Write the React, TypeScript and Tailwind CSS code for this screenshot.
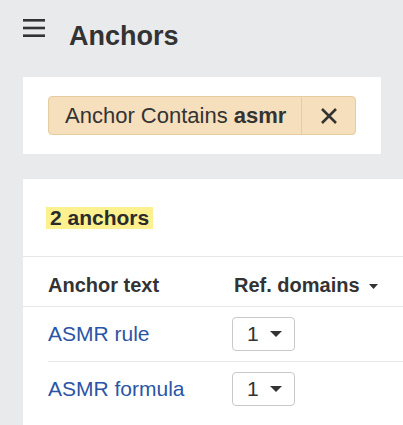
import React from "react";

function Caret({ w, h }: { w: number; h: number }) {
  return (
    <svg width={w} height={h} viewBox={`0 0 ${w} ${h}`} className="shrink-0">
      <polygon points={`0,0 ${w},0 ${w / 2},${h}`} fill="#333333" />
    </svg>
  );
}

function Dropdown() {
  return (
    <div className="flex h-[34px] w-[63px] items-center rounded-[4px] border border-[#c9c9cb] bg-white pl-[14px] text-[21px] leading-[32px] text-[#333333]">
      <span>1</span>
      <span className="ml-[11px] flex items-center">
        <Caret w={12} h={6} />
      </span>
    </div>
  );
}

export default function App() {
  const rows = ["ASMR rule", "ASMR formula"];
  return (
    <div
      className="min-h-[425px] w-full overflow-hidden bg-[#e9eaec] text-[#333333]"
      style={{ fontFamily: '"Liberation Sans", Arial, sans-serif' }}
    >
      <div className="flex items-start pl-[23px] pt-[19px]">
        <svg width="22" height="18" viewBox="0 0 22 18" className="shrink-0">
          <rect x="0" y="0" width="22" height="2.6" fill="#333333" />
          <rect x="0" y="7.7" width="22" height="2.6" fill="#333333" />
          <rect x="0" y="15.4" width="22" height="2.6" fill="#333333" />
        </svg>
        <h1 className="ml-[24px] mt-[1px] text-[27px] font-bold leading-[32px]">Anchors</h1>
      </div>

      <div className="ml-[23px] mt-[25px] w-[358px] bg-white px-[25px] py-[19px]">
        <div className="flex h-[39px] w-fit items-stretch whitespace-nowrap rounded-[4px] border border-[#e6cd9f] bg-[#f5dfbc]">
          <div className="whitespace-nowrap pl-[16px] pr-[15px] text-[22px] leading-[37px]">
            Anchor Contains <b>asmr</b>
          </div>
          <div className="flex w-[54px] shrink-0 items-center justify-center border-l border-[#e6cd9f]">
            <svg width="18" height="16" viewBox="0 0 18 16">
              <path d="M2 1 L16 15 M16 1 L2 15" stroke="#333333" strokeWidth="2.6" fill="none" />
            </svg>
          </div>
        </div>
      </div>

      <div className="ml-[23px] mt-[25px] bg-white pb-[20px]">
        <div className="border-b border-[#e6e7e9] pl-[23px] pb-[27px] pt-[28px] text-[21px] leading-[22px]">
          <span className="inline-block bg-[#fcf18e] px-[4px] font-bold leading-[22px] text-[#2b2b2b]">2 anchors</span>
        </div>
        <div className="grid grid-cols-[184px_1fr] border-b border-[#e6e7e9] pl-[25px] pb-[9px] pt-[16px] text-[20px] font-bold leading-[24px]">
          <div>Anchor text</div>
          <div className="flex items-center pl-[2px]">
            <span>Ref. domains</span>
            <span className="ml-[9px] mt-[2px] flex items-center">
              <Caret w={9} h={5} />
            </span>
          </div>
        </div>
        <div className="ml-[25px]">
          {rows.map((r, i) => (
            <div
              key={r}
              className={`grid grid-cols-[184px_1fr] items-center py-[10px] ${i === 0 ? "border-b border-[#e6e7e9]" : ""}`}
            >
              <div className="text-[21px] leading-[26px] text-[#2a55a5]">{r}</div>
              <Dropdown />
            </div>
          ))}
        </div>
      </div>
    </div>
  );
}
